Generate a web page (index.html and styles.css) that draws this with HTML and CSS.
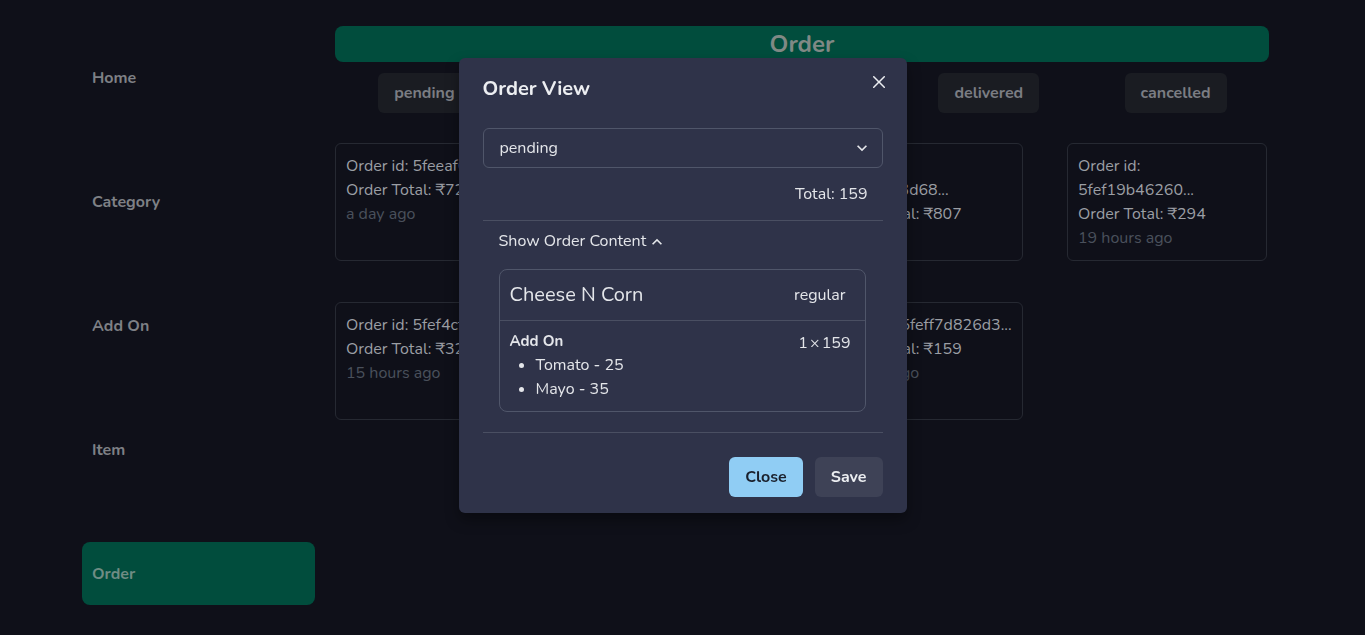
FILE: index.html
```html
<!DOCTYPE html>
<html lang="en">
<head>
<meta charset="utf-8">
<title>Order</title>
<link rel="stylesheet" href="styles.css">
</head>
<body>
<div class="app">
  <nav class="sidebar">
    <div class="nav-item">Home</div>
    <div class="nav-item">Category</div>
    <div class="nav-item">Add On</div>
    <div class="nav-item">Item</div>
    <div class="nav-item active">Order</div>
  </nav>
  <main class="main">
    <div class="title-bar">Order</div>
    <div class="tabs">
      <div class="tab-cell"><span class="tab">pending</span></div>
      <div class="tab-cell"><span class="tab">accepted</span></div>
      <div class="tab-cell"><span class="tab">dispatched</span></div>
      <div class="tab-cell"><span class="tab">delivered</span></div>
      <div class="tab-cell"><span class="tab">cancelled</span></div>
    </div>
    <div class="cards">
      <div class="card">
        <div>Order id: 5feeaf0c9a21...</div>
        <div>Order Total: ₹720</div>
        <div class="time">a day ago</div>
      </div>
      <div class="card">
        <div>Order id: 5fef0a2b7c11...</div>
        <div>Order Total: ₹450</div>
        <div class="time">a day ago</div>
      </div>
      <div class="card">
        <div>Order id: 5fef1b2a3d68...</div>
        <div>Order Total: ₹807</div>
        <div class="time">a day ago</div>
      </div>
      <div class="card">
        <div>Order id: 5fef19b46260...</div>
        <div>Order Total: ₹294</div>
        <div class="time">19 hours ago</div>
      </div>
      <div class="card">
        <div>Order id: 5fef4cf7d821...</div>
        <div>Order Total: ₹320</div>
        <div class="time">15 hours ago</div>
      </div>
      <div class="card">
        <div>Order id: 5fef52d9a144...</div>
        <div>Order Total: ₹210</div>
        <div class="time">14 hours ago</div>
      </div>
      <div class="card">
        <div>Order id: 5feff7d826d3...</div>
        <div>Order Total: ₹159</div>
        <div class="time">an hour ago</div>
      </div>
    </div>
  </main>
</div>

<div class="overlay">
  <section class="modal">
    <header class="modal-header">Order View</header>
    <button class="modal-close" aria-label="Close">
      <svg width="12" height="12" viewBox="0 0 24 24"><path fill="currentColor" d="M.44 21.44a1.49 1.49 0 0 0 0 2.12 1.5 1.5 0 0 0 2.12 0L12 14.12l9.44 9.44a1.5 1.5 0 0 0 2.12 0 1.49 1.49 0 0 0 0-2.12L14.12 12l9.44-9.44a1.5 1.5 0 0 0-2.12-2.12L12 9.88 2.56.44A1.5 1.5 0 0 0 .44 2.56L9.88 12Z"/></svg>
    </button>
    <div class="modal-body">
      <div class="select">
        <span>pending</span>
        <svg width="20" height="20" viewBox="0 0 24 24"><path fill="currentColor" d="M16.59 8.59L12 13.17 7.41 8.59 6 10l6 6 6-6z"/></svg>
      </div>
      <div class="total">Total: 159</div>
      <div class="accordion">
        <div class="acc-button">Show Order Content
          <svg width="20" height="20" viewBox="0 0 24 24"><path fill="currentColor" d="M7.41 15.41L12 10.83l4.59 4.58L18 14l-6-6-6 6z"/></svg>
        </div>
        <div class="acc-panel">
          <div class="item-box">
            <div class="item-head">
              <span class="item-name">Cheese N Corn</span>
              <span class="item-size">regular</span>
            </div>
            <div class="item-body">
              <div class="addons">
                <div class="addon-title">Add On</div>
                <ul class="addon-list">
                  <li>Tomato - 25</li>
                  <li>Mayo - 35</li>
                </ul>
              </div>
              <div class="qty">1 × 159</div>
            </div>
          </div>
        </div>
      </div>
    </div>
    <footer class="modal-footer">
      <button class="btn btn-blue">Close</button>
      <button class="btn btn-ghost">Save</button>
    </footer>
  </section>
</div>
</body>
</html>
```

FILE: styles.css
```css
* { box-sizing: border-box; }
html, body { margin: 0; padding: 0; }
body {
  background: #0f1019;
  font-family: "Nunito", "Lato", "Noto Sans", sans-serif;
  font-size: 16px;
  line-height: 1.5;
  color: #9b9ea4;
  height: 635px;
  overflow: hidden;
}
.app { display: flex; align-items: flex-start; }
.sidebar {
  width: 315px;
  padding: 46px 0 0 82px;
  display: flex;
  flex-direction: column;
  gap: 61px;
}
.nav-item {
  height: 63px;
  display: flex;
  align-items: center;
  padding-left: 10px;
  font-weight: 700;
  color: #7e8085;
  border-radius: 8px;
}
.nav-item.active { background: #014d3d; color: #6f8c84; }
.main { margin-left: 20px; width: 934px; padding-top: 26px; }
.title-bar {
  height: 36px;
  border-radius: 8px;
  background: #014d3d;
  color: #808985;
  font-size: 24px;
  font-weight: 700;
  text-align: center;
  line-height: 36px;
}
.tabs { display: grid; grid-template-columns: repeat(5, 1fr); margin-top: 11px; }
.tab-cell { display: flex; justify-content: center; }
.tab {
  height: 40px;
  padding: 0 16px;
  border-radius: 6px;
  background: #1a1c22;
  color: #7b7d83;
  font-weight: 700;
  display: flex;
  align-items: center;
}
.tab-cell:first-child .tab { margin-left: -8px; }
.cards {
  display: grid;
  grid-template-columns: repeat(4, 200px);
  column-gap: 44px;
  row-gap: 41px;
  margin-top: 30px;
}
.card {
  height: 118px;
  border: 1px solid #262932;
  border-radius: 6px;
  padding: 10px 10px;
}
.card .time { color: #4a505c; }

.overlay {
  position: fixed;
  inset: 0;
  display: flex;
  justify-content: center;
  align-items: flex-start;
}
.modal {
  position: relative;
  margin-top: 58px;
  width: 448px;
  background: #2f3349;
  border-radius: 6px;
  box-shadow: 0 7px 14px rgba(0,0,0,0.35);
  color: #e4e6ea;
}
.modal-header {
  padding: 16px 24px;
  font-size: 20px;
  font-weight: 700;
  line-height: 30px;
  color: #eceef1;
}
.modal-close {
  position: absolute;
  top: 8px;
  right: 12px;
  width: 32px;
  height: 32px;
  border: 0;
  background: transparent;
  color: #eceef1;
  display: flex;
  align-items: center;
  justify-content: center;
  padding: 0;
}
.modal-body { padding: 8px 24px; }
.select {
  height: 40px;
  border: 1px solid #50566a;
  border-radius: 6px;
  padding: 0 10px 0 16px;
  display: flex;
  align-items: center;
  justify-content: space-between;
  color: #e4e6ea;
}
.total { text-align: right; padding: 14px 15px 14px 0; }
.accordion { border-top: 1px solid #4a4f62; border-bottom: 1px solid #4a4f62; }
.acc-button {
  height: 40px;
  padding: 0 16px;
  display: flex;
  align-items: center;
}
.acc-button svg { margin-left: 1px; margin-top: 1px; }
.acc-panel { padding: 8px 16px 20px; }
.item-box {
  border: 1px solid #50566a;
  border-radius: 8px;
  margin-right: 1px;
}
.item-head {
  display: flex;
  justify-content: space-between;
  align-items: center;
  padding: 10px 19px 10px 10px;
  border-bottom: 1px solid #4a4f62;
}
.item-name { font-size: 20px; line-height: 30px; }
.item-size { font-size: 16px; }
.item-body {
  display: flex;
  justify-content: space-between;
  padding: 9px 14px 10px 10px;
}
.addon-title { font-weight: 700; font-size: 15px; line-height: 23px; }
.addon-list { margin: 0; padding-left: 26px; }
.qty { line-height: 24px; margin-top: 1px; word-spacing: -2px; }
.modal-footer {
  display: flex;
  justify-content: flex-end;
  gap: 12px;
  padding: 16px 24px;
}
.btn {
  height: 40px;
  padding: 0 16px;
  border: 0;
  border-radius: 6px;
  font-family: inherit;
  font-size: 16px;
  font-weight: 700;
}
.btn-blue { background: #90cdf4; color: #1a202c; }
.btn-ghost { background: #3e4256; color: #eceef1; }
```
